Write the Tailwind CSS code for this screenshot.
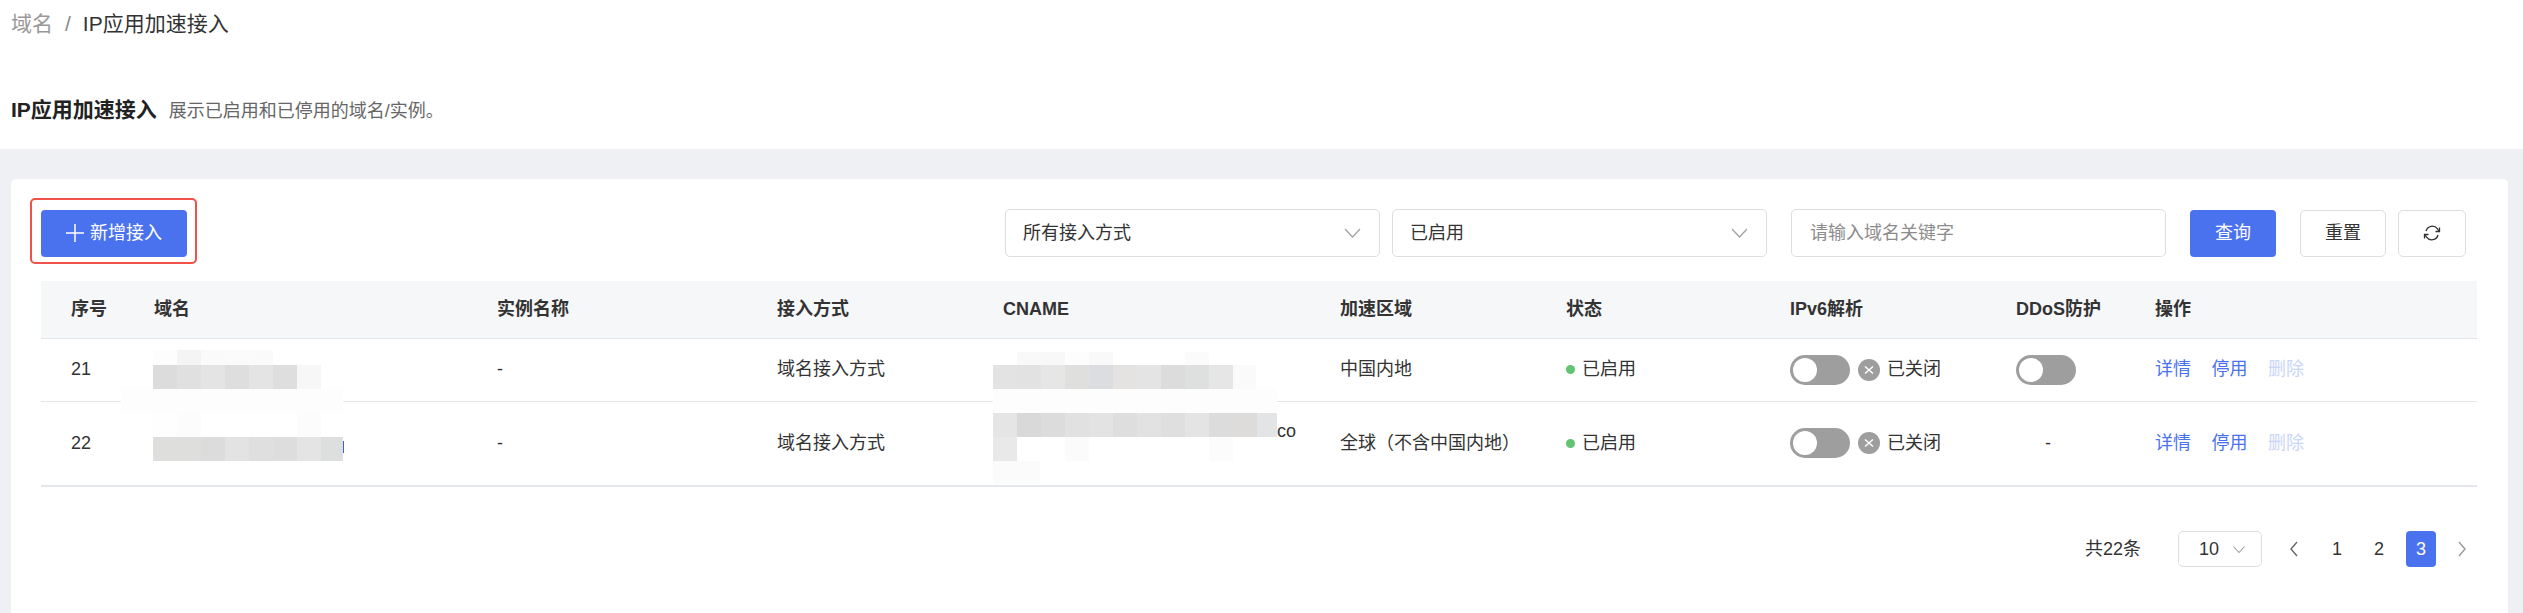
<!DOCTYPE html>
<html lang="zh-CN">
<head>
    <meta charset="UTF-8">
    <title>IP应用加速接入</title>
    <script src="https://cdn.jsdelivr.net/npm/@tailwindcss/browser@4"></script>
</head>
<body class="bg-[#eef0f4] h-[613px] overflow-hidden font-['Liberation_Sans','Noto_Sans_CJK_SC',sans-serif] text-[18px] text-[#333]">
    <!-- 页头 -->
    <div class="bg-white h-[149px] pl-[11px] pt-[10px]">
        <div class="flex items-center h-[28px] text-[21px] leading-[28px]">
            <span class="text-[#999]">域名</span>
            <span class="text-[#888] mx-[12px]">/</span>
            <span class="text-[#333]">IP应用加速接入</span>
        </div>
        <div class="flex items-baseline mt-[58px] leading-[28px]">
            <span class="text-[21px] font-bold text-[#222]">IP应用加速接入</span>
            <span class="text-[18px] text-[#666] ml-[12px]">展示已启用和已停用的域名/实例。</span>
        </div>
    </div>

    <!-- 内容卡片 -->
    <div class="bg-white ml-[11px] mt-[30px] w-[2497px] h-[434px] rounded-t-[5px] pt-[30px] px-[30px]">
        <div class="flex items-center h-[48px] pr-[12px]">
            <div class="relative">
                <div class="absolute -left-[11px] -top-[12px] w-[167px] h-[66px] border-2 border-[#f0524a] rounded-[5px]"></div>
                <button class="flex items-center justify-center gap-[6px] w-[146px] h-[47px] bg-[#4b72ee] text-white rounded-[4px]">
                    <svg class="w-[18px] h-[18px]" viewBox="0 0 18 18" fill="none" stroke="currentColor" stroke-width="1.5"><path d="M9 0v18M0 9h18"/></svg>
                    新增接入
                </button>
            </div>
            <div class="ml-auto flex items-center justify-between w-[375px] h-[48px] border border-[#dcdee2] rounded-[5px] pl-[17px] pr-[18px]">
                <span>所有接入方式</span>
                <svg class="w-[17px] h-[10px] text-[#a0a0a0]" viewBox="0 0 17 10" fill="none" stroke="currentColor" stroke-width="1.2"><path d="M1 1l7.5 8L16 1"/></svg>
            </div>
            <div class="ml-[12px] flex items-center justify-between w-[375px] h-[48px] border border-[#dcdee2] rounded-[5px] pl-[17px] pr-[18px]">
                <span>已启用</span>
                <svg class="w-[17px] h-[10px] text-[#a0a0a0]" viewBox="0 0 17 10" fill="none" stroke="currentColor" stroke-width="1.2"><path d="M1 1l7.5 8L16 1"/></svg>
            </div>
            <div class="ml-[24px] flex items-center w-[375px] h-[48px] border border-[#dcdee2] rounded-[5px] pl-[18px] text-[#8c8c8c]">请输入域名关键字</div>
            <button class="ml-[24px] w-[86px] h-[47px] bg-[#4b72ee] text-white rounded-[4px]">查询</button>
            <button class="ml-[24px] w-[86px] h-[47px] border border-[#dcdee2] rounded-[5px] text-[#333]">重置</button>
            <button class="ml-[12px] flex items-center justify-center w-[68px] h-[47px] border border-[#dcdee2] rounded-[5px]">
                <svg class="w-[18px] h-[18px]" viewBox="0 0 18 18" fill="none" stroke="#333" stroke-width="1.3">
                    <path d="M3 7a6.5 6.5 0 0 1 11.5-2.2L16 7"/>
                    <path d="M15 11a6.5 6.5 0 0 1-11.5 2.2L2 11"/>
                    <path d="M16.5 3.5V7.5H12.5M1.5 14.5V10.5H5.5"/>
                </svg>
            </button>
        </div>

        <table class="table-fixed w-[2436px] mt-[24px] relative">
            <colgroup>
                <col class="w-[113px]"><col class="w-[343px]"><col class="w-[280px]"><col class="w-[226px]"><col class="w-[337px]">
                <col class="w-[226px]"><col class="w-[224px]"><col class="w-[226px]"><col class="w-[139px]"><col class="w-[322px]">
            </colgroup>
            <thead>
                <tr class="h-[57px] bg-[#f6f7f9] border-b border-[#e3e6eb] text-left font-bold text-[#333]">
                    <th class="pl-[30px]">序号</th><th>域名</th><th>实例名称</th><th>接入方式</th><th>CNAME</th>
                    <th>加速区域</th><th>状态</th><th>IPv6解析</th><th>DDoS防护</th><th>操作</th>
                </tr>
            </thead>
            <tbody>
                <tr class="h-[63px] border-b border-[#e3e6eb]">
                    <td class="pl-[30px]">21</td>
                    <td></td>
                    <td>-</td>
                    <td>域名接入方式</td>
                    <td></td>
                    <td>中国内地</td>
                    <td>
                        <span class="flex items-center gap-[7px]"><i class="w-[9px] h-[9px] rounded-full bg-[#62c370]"></i>已启用</span>
                    </td>
                    <td>
                        <div class="flex items-center">
                            <span class="flex items-center w-[60px] h-[30px] rounded-full bg-[#9e9e9e] pl-[3px]"><i class="w-[24px] h-[24px] rounded-full bg-white"></i></span>
                            <svg class="w-[22px] h-[22px] ml-[8px]" viewBox="0 0 22 22"><circle cx="11" cy="11" r="11" fill="#9e9e9e"/><path d="M7 7.500l8 7M15 7.500l-8 7" stroke="#fff" stroke-width="1.5"/></svg>
                            <span class="ml-[7px]">已关闭</span>
                        </div>
                    </td>
                    <td>
                        <span class="flex items-center w-[60px] h-[30px] rounded-full bg-[#9e9e9e] pl-[3px]"><i class="w-[24px] h-[24px] rounded-full bg-white"></i></span>
                    </td>
                    <td>
                        <div class="flex gap-[20.5px]"><a class="text-[#4b72ee]">详情</a><a class="text-[#4b72ee]">停用</a><a class="text-[#c9d6f8]">删除</a></div>
                    </td>
                </tr>
                <tr class="h-[85px] border-b-2 border-[#e3e6eb]">
                    <td class="pl-[30px]">22</td>
                    <td></td>
                    <td>-</td>
                    <td>域名接入方式</td>
                    <td class="pl-[274px] pb-[24px] leading-[24px]">co</td>
                    <td>全球（不含中国内地）</td>
                    <td>
                        <span class="flex items-center gap-[7px]"><i class="w-[9px] h-[9px] rounded-full bg-[#62c370]"></i>已启用</span>
                    </td>
                    <td>
                        <div class="flex items-center">
                            <span class="flex items-center w-[60px] h-[30px] rounded-full bg-[#9e9e9e] pl-[3px]"><i class="w-[24px] h-[24px] rounded-full bg-white"></i></span>
                            <svg class="w-[22px] h-[22px] ml-[8px]" viewBox="0 0 22 22"><circle cx="11" cy="11" r="11" fill="#9e9e9e"/><path d="M7 7.500l8 7M15 7.500l-8 7" stroke="#fff" stroke-width="1.5"/></svg>
                            <span class="ml-[7px]">已关闭</span>
                        </div>
                    </td>
                    <td class="pl-[29px]">-</td>
                    <td>
                        <div class="flex gap-[20.5px]"><a class="text-[#4b72ee]">详情</a><a class="text-[#4b72ee]">停用</a><a class="text-[#c9d6f8]">删除</a></div>
                    </td>
                </tr>
            </tbody>
        </table>

        <!-- 分页 -->
        <div class="flex items-center h-[36px] mt-[44px] ml-[2044px]">
            <span class="w-[93px]">共22条</span>
            <div class="flex items-center w-[84px] h-[36px] border border-[#dcdee2] rounded-[5px] pl-[20px]">
                10
                <svg class="w-[12px] h-[7px] ml-[14px] text-[#a0a0a0]" viewBox="0 0 12 7" fill="none" stroke="currentColor" stroke-width="1.1"><path d="M.5.5L6 6.500 11.500.5"/></svg>
            </div>
            <svg class="w-[8px] h-[16px] ml-[28px] text-[#666]" viewBox="0 0 8 16" fill="none" stroke="currentColor" stroke-width="1.4"><path d="M7 1L1 8l6 7"/></svg>
            <span class="w-[30px] ml-[24px] text-center">1</span>
            <span class="w-[30px] ml-[12px] text-center">2</span>
            <span class="flex items-center justify-center w-[30px] h-[36px] ml-[12px] bg-[#4b72ee] text-white rounded-[4px]">3</span>
            <svg class="w-[8px] h-[16px] ml-[22px] text-[#999]" viewBox="0 0 8 16" fill="none" stroke="currentColor" stroke-width="1.4"><path d="M1 1l6 7-6 7"/></svg>
        </div>
    </div>

    <!-- 打码区域：域名、CNAME -->
    <svg class="absolute left-0 top-0 pointer-events-none" width="2523" height="613" shape-rendering="crispEdges">
        <g>
            <rect x="153" y="350" width="24" height="15" fill="#fdfdfd"/><rect x="177" y="350" width="24" height="15" fill="#f4f4f4"/><rect x="201" y="350" width="24" height="15" fill="#fafafa"/><rect x="225" y="350" width="24" height="15" fill="#fbfbfb"/><rect x="249" y="350" width="24" height="15" fill="#fafafa"/>
            <rect x="153" y="365" width="24" height="24" fill="#dcdcdc"/><rect x="177" y="365" width="24" height="24" fill="#e0e0e0"/><rect x="201" y="365" width="24" height="24" fill="#e3e4e3"/><rect x="225" y="365" width="24" height="24" fill="#dedede"/><rect x="249" y="365" width="24" height="24" fill="#e4e4e4"/><rect x="273" y="365" width="24" height="24" fill="#dedede"/><rect x="297" y="365" width="24" height="24" fill="#f7f7f7"/>
            <rect x="121" y="389" width="222" height="24" fill="#fdfdfd"/>
            <rect x="153" y="413" width="24" height="24" fill="#fefefe"/><rect x="177" y="413" width="24" height="24" fill="#fcfcfc"/><rect x="297" y="413" width="24" height="24" fill="#fcfcfc"/>
            <rect x="153" y="437" width="24" height="24" fill="#dededd"/><rect x="177" y="437" width="24" height="24" fill="#dededd"/><rect x="201" y="437" width="24" height="24" fill="#dcdcdc"/><rect x="225" y="437" width="24" height="24" fill="#e3e3e3"/><rect x="249" y="437" width="24" height="24" fill="#dfdfdf"/><rect x="273" y="437" width="24" height="24" fill="#dddddd"/><rect x="297" y="437" width="24" height="24" fill="#e4e4e4"/><rect x="321" y="437" width="22" height="24" fill="#dddfde"/>
            <rect x="343" y="441" width="1" height="12" fill="#3b62c8"/>
        </g>
        <g>
            <rect x="1017" y="352" width="24" height="13" fill="#f9f9f9"/><rect x="1041" y="352" width="24" height="13" fill="#f8f8f8"/><rect x="1065" y="352" width="24" height="13" fill="#fdfdfd"/><rect x="1089" y="352" width="24" height="13" fill="#f9f9f9"/><rect x="1185" y="352" width="24" height="13" fill="#fbfbfb"/>
            <rect x="993" y="365" width="24" height="24" fill="#e3e3e3"/><rect x="1017" y="365" width="24" height="24" fill="#e2e2e2"/><rect x="1041" y="365" width="24" height="24" fill="#e6e6e6"/><rect x="1065" y="365" width="24" height="24" fill="#dfdfde"/><rect x="1089" y="365" width="24" height="24" fill="#dcdde0"/><rect x="1113" y="365" width="24" height="24" fill="#e4e3e1"/><rect x="1137" y="365" width="24" height="24" fill="#e4e4e4"/><rect x="1161" y="365" width="24" height="24" fill="#dcdcdc"/><rect x="1185" y="365" width="24" height="24" fill="#dee0df"/><rect x="1209" y="365" width="24" height="24" fill="#e6e6e6"/><rect x="1233" y="365" width="23" height="24" fill="#fafafa"/>
            <rect x="993" y="389" width="284" height="24" fill="#fdfdfd"/>
            <rect x="993" y="413" width="24" height="24" fill="#e5e5e5"/><rect x="1017" y="413" width="24" height="24" fill="#d9d9d9"/><rect x="1041" y="413" width="24" height="24" fill="#dcdcdc"/><rect x="1065" y="413" width="24" height="24" fill="#e1e1e1"/><rect x="1089" y="413" width="24" height="24" fill="#e3e3e3"/><rect x="1113" y="413" width="24" height="24" fill="#dedede"/><rect x="1137" y="413" width="24" height="24" fill="#e2e2e2"/><rect x="1161" y="413" width="24" height="24" fill="#dfdfdf"/><rect x="1185" y="413" width="24" height="24" fill="#e4e4e4"/><rect x="1209" y="413" width="24" height="24" fill="#dcdcdc"/><rect x="1233" y="413" width="24" height="24" fill="#dedcdb"/><rect x="1257" y="413" width="20" height="24" fill="#e2e4e6"/>
            <rect x="993" y="437" width="24" height="24" fill="#e9e9e9"/><rect x="1065" y="437" width="24" height="24" fill="#fbfbfb"/><rect x="1209" y="437" width="24" height="24" fill="#fcfcfc"/>
            <rect x="993" y="461" width="47" height="23" fill="#fbfbfb"/>
        </g>
    </svg>
</body>
</html>
